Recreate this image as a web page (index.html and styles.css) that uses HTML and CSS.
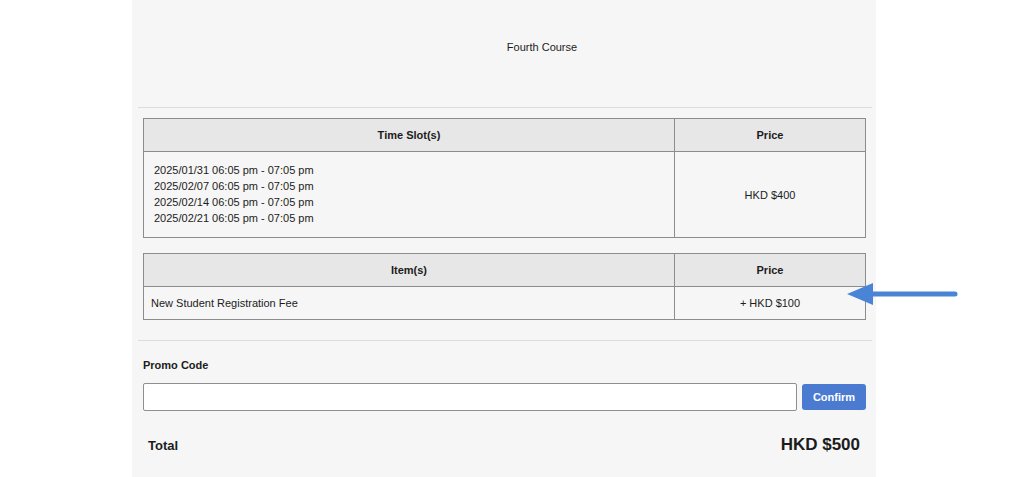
FILE: index.html
```html
<!DOCTYPE html>
<html lang="en">
<head>
  <meta charset="UTF-8">
  <meta name="viewport" content="width=device-width, initial-scale=1.0">
  <title>Checkout - Fourth Course</title>
  <link rel="stylesheet" href="styles.css">
</head>
<body>
  <div class="panel">
    <div class="course-header">
      <div class="course-title">Fourth Course</div>
    </div>
    <hr class="divider">

    <div class="tables">
      <table class="order-table">
        <colgroup>
          <col class="col-main">
          <col>
        </colgroup>
        <thead>
          <tr>
            <th>Time Slot(s)</th>
            <th>Price</th>
          </tr>
        </thead>
        <tbody>
          <tr>
            <td class="slots">
              2025/01/31 06:05 pm - 07:05 pm<br>
              2025/02/07 06:05 pm - 07:05 pm<br>
              2025/02/14 06:05 pm - 07:05 pm<br>
              2025/02/21 06:05 pm - 07:05 pm
            </td>
            <td class="price">HKD $400</td>
          </tr>
        </tbody>
      </table>

      <table class="order-table items">
        <colgroup>
          <col class="col-main">
          <col>
        </colgroup>
        <thead>
          <tr>
            <th>Item(s)</th>
            <th>Price</th>
          </tr>
        </thead>
        <tbody>
          <tr>
            <td class="item">New Student Registration Fee</td>
            <td class="price">+ HKD $100</td>
          </tr>
        </tbody>
      </table>
    </div>

    <hr class="divider divider-low">

    <div class="promo">
      <label for="promo-code">Promo Code</label>
      <div class="promo-row">
        <input type="text" id="promo-code" name="promo-code">
        <button type="button" class="btn-confirm">Confirm</button>
      </div>
    </div>

    <div class="total">
      <span class="total-label">Total</span>
      <span class="total-value">HKD $500</span>
    </div>
  </div>

  <!-- annotation arrow pointing at the registration fee -->
  <svg class="arrow" width="116" height="28" viewBox="0 0 116 28">
    <line x1="26" y1="14" x2="110" y2="14" stroke="#4a84d6" stroke-width="5" stroke-linecap="round"/>
    <polygon points="2,14 28,3 28,25" fill="#4a84d6"/>
  </svg>
</body>
</html>
```

FILE: styles.css
```css
:root {
  --panel: #f6f6f6;
  --head: #e7e7e7;
  --border: #8c8c8c;
  --divider: #dcdcdc;
  --text: #1c1c1c;
  --primary: #4a7bd1;
}

* {
  margin: 0;
  padding: 0;
  box-sizing: border-box;
  font-family: 'Liberation Sans', Arial, sans-serif;
}

body {
  background-color: #ffffff;
  color: var(--text);
  height: 477px;
  overflow: hidden;
  position: relative;
}

.panel {
  width: 744px;
  height: 477px;
  margin-left: 132px;
  padding: 0 4px 0 6px;
  background-color: var(--panel);
}

.course-header {
  height: 107px;
  padding: 40px 0 0 74px;
  text-align: center;
}

.course-title {
  font-size: 11px;
  line-height: 14px;
}

.divider {
  border: none;
  border-top: 1px solid var(--divider);
}

.divider-low {
  margin-top: 20px;
}

.tables {
  padding: 10px 6px 0 5px;
}

.order-table {
  width: 723px;
  border-collapse: collapse;
  font-size: 11px;
}

.order-table.items {
  margin-top: 15px;
}

.col-main {
  width: 531px;
}

.order-table th,
.order-table td {
  border: 1px solid var(--border);
}

.order-table th {
  background-color: var(--head);
  height: 33px;
  font-weight: bold;
  text-align: center;
  vertical-align: middle;
}

.order-table td.slots {
  padding: 10px 10px 11px 10px;
  line-height: 16px;
  text-align: left;
}

.order-table td.item {
  height: 33px;
  padding: 0 7px;
  text-align: left;
}

.order-table td.price {
  text-align: center;
  vertical-align: middle;
}

.promo {
  padding: 17px 6px 0 5px;
}

.promo label {
  display: block;
  font-size: 11px;
  line-height: 14px;
  font-weight: bold;
  margin-bottom: 11px;
}

.promo-row {
  display: flex;
  gap: 5px;
  align-items: center;
}

.promo-row input {
  flex: 1;
  height: 28px;
  border: 1px solid #8f8f8f;
  border-radius: 2px;
  background-color: #ffffff;
  font-size: 12px;
  padding: 0 6px;
}

.btn-confirm {
  width: 64px;
  height: 26px;
  border: none;
  border-radius: 3px;
  background-color: var(--primary);
  color: #ffffff;
  font-size: 11px;
  font-weight: bold;
  cursor: pointer;
}

.total {
  display: flex;
  justify-content: space-between;
  align-items: center;
  margin-top: 24px;
  padding: 0 12px 0 10px;
  height: 20px;
}

.total-label {
  font-size: 13px;
  font-weight: bold;
}

.total-value {
  font-size: 17px;
  font-weight: bold;
}

.arrow {
  position: absolute;
  left: 845px;
  top: 280px;
}
```
